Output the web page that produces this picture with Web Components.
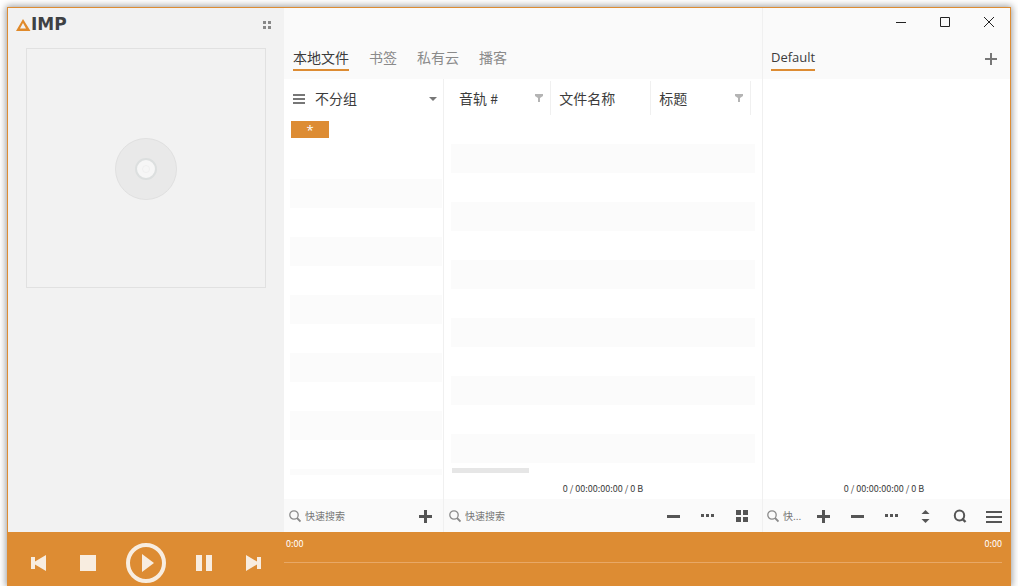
<!DOCTYPE html>
<html lang="zh-CN">
<head>
<meta charset="utf-8">
<title>AIMP</title>
<style>
  :root {
    --accent: #dd8c33;
    --bar: #fafafa;
    --stripe: #fbfbfb;
    --line: #f0f0f0;
    --ink: #3c3c3c;
    --muted: #8a8a8a;
    --glyph: #555;
  }
  body {
    margin: 0;
    background: #fff;
    overflow: hidden;
    color: var(--ink);
    font: 14px/20px "Noto Sans CJK SC", sans-serif;
  }
</style>
</head>
<body>
<player-window>
  <cover-panel slot="side"></cover-panel>
  <media-library slot="library"></media-library>
  <play-list slot="playlist"></play-list>
  <transport-bar slot="transport"></transport-bar>
</player-window>

<script>
const define = (name, html, setup) => {
  const template = document.createElement('template');
  template.innerHTML = html;
  customElements.define(name, class extends HTMLElement {
    constructor() {
      super();
      this.attachShadow({ mode: 'open' }).append(template.content.cloneNode(true));
    }
    connectedCallback() {
      if (setup) setup(this, this.shadowRoot);
    }
  });
};

const rect = (x, y, w, h) => `<rect x="${x}" y="${y}" width="${w}" height="${h}"/>`;
const svg = (w, h, body) => `<svg width="${w}" height="${h}" viewBox="0 0 ${w} ${h}" fill="currentColor" aria-hidden="true">${body}</svg>`;
const icons = {
  plus: svg(16, 16, rect(1, 7, 13, 3) + rect(6, 2, 3, 13)),
  minus: svg(16, 16, rect(1, 7, 13, 3)),
  dots: svg(16, 16, rect(1, 6, 3, 3) + rect(6, 6, 3, 3) + rect(11, 6, 3, 3)),
  tiles: svg(16, 16, rect(2, 2, 5, 5) + rect(9, 2, 5, 5) + rect(2, 9, 5, 5) + rect(9, 9, 5, 5)),
  sort: svg(16, 16, '<path d="M7.5 2 11.5 6h-8zM7.5 15l-4-4h8z"/>'),
  find: svg(16, 16, '<ellipse cx="7.5" cy="7.5" rx="4.7" ry="5" fill="none" stroke="currentColor" stroke-width="2"/><path d="m10 10.500 3.500 3.500" stroke="currentColor" stroke-width="2.4"/>'),
  menu: svg(16, 16, rect(0, 3, 16, 2) + rect(0, 8, 16, 2) + rect(0, 13, 16, 2)),
  lens: svg(12, 14, '<circle cx="5" cy="6" r="4.2" fill="none" stroke="currentColor" stroke-width="1.3"/><path d="m8 9 3.5 3.5" stroke="currentColor" stroke-width="1.8"/>'),
  add: svg(12, 12, rect(0, 5, 12, 2) + rect(5, 0, 2, 12)),
  list: svg(12, 12, rect(0, 1, 12, 2) + rect(0, 5, 12, 2) + rect(0, 9, 12, 2)),
  caret: svg(8, 4, '<path d="M0 0h8L4 4z"/>'),
  funnel: svg(8, 8, '<path d="M0 0h8v2L5 4v4H3V4L0 2z"/>'),
  grip: svg(8, 8, rect(0, 0, 3, 3) + rect(5, 0, 3, 3) + rect(0, 5, 3, 3) + rect(5, 5, 3, 3)),
  minimize: svg(11, 11, rect(0, 5, 10, 1)),
  maximize: svg(11, 11, '<path d="M.5.5h9v9h-9z" fill="none" stroke="currentColor"/>'),
  close: svg(11, 11, '<path d="m0 0 10 10M10 0 0 10" fill="none" stroke="currentColor"/>'),
  prev: svg(16, 16, '<path d="M1 2h4v4.5L16 0v16L5 9.5V14H1z"/>'),
  stop: svg(16, 16, rect(0, 0, 16, 16)),
  play: svg(40, 40, '<circle cx="20" cy="20" r="18" fill="none" stroke="currentColor" stroke-width="4"/><path d="M16 11v18l12-9z"/>'),
  pause: svg(16, 16, rect(0, 0, 6, 16) + rect(10, 0, 6, 16)),
  next: svg(16, 16, '<path d="M15 2h-4v4.5L0 0v16l11-6.5V14h4z"/>')
};

define('ui-icon', `
  <style>
    :host { display: block; }
    span, svg { display: block; }
  </style>
  <span></span>`, (el, root) => {
  root.querySelector('span').innerHTML = icons[el.getAttribute('name')] || '';
});

define('icon-button', `
  <style>
    :host { display: block; color: var(--glyph); }
    button {
      display: flex; align-items: center; justify-content: center;
      width: 100%; height: 100%; padding: 0; border: 0;
      background: none; color: inherit; cursor: pointer;
    }
  </style>
  <button type="button"></button>`, (el, root) => {
  const icon = document.createElement('ui-icon');
  icon.setAttribute('name', el.getAttribute('icon'));
  const button = root.querySelector('button');
  button.setAttribute('aria-label', el.getAttribute('label'));
  button.replaceChildren(icon);
});

define('quick-search', `
  <style>
    :host { display: block; flex: 1; min-width: 0; }
    label { display: flex; align-items: center; gap: 4px; height: 16px; color: var(--muted); }
    ui-icon { flex: none; }
    input {
      flex: 1; min-width: 0; width: 20px; height: 16px; padding: 0; border: 0; outline: 0;
      background: none; color: var(--ink);
      font: 10px/16px "Noto Sans CJK SC", sans-serif;
    }
    input::placeholder { color: #777; opacity: 1; }
  </style>
  <label><ui-icon name="lens"></ui-icon><input type="text" aria-label="快速搜索"></label>`, (el, root) => {
  root.querySelector('input').placeholder = el.getAttribute('hint') || '快速搜索';
});

define('tool-bar', `
  <style>
    :host {
      display: flex; gap: 18px; box-sizing: border-box; height: 33px; flex: none;
      padding: 9px 9px 8px 5px; background: var(--bar);
    }
    ::slotted(icon-button) { width: 16px; height: 16px; flex: none; }
  </style>
  <slot></slot>`);

define('tab-link', `
  <style>
    :host { display: block; }
    a {
      display: block; color: var(--muted); text-decoration: none;
      line-height: 18px; padding-bottom: 3px; border-bottom: 2px solid transparent;
    }
    :host([active]) a { color: var(--ink); border-color: var(--accent); }
  </style>
  <a href="#"><slot></slot></a>`);

define('cover-panel', `
  <style>
    :host { display: block; background: #f2f2f2; }
    header { display: flex; align-items: center; height: 40px; box-sizing: border-box; padding: 0 13px 7px 8px; }
    h1 {
      display: flex; align-items: center; margin: 0; flex: 1; color: #3e4144;
      font: bold 17px/17px "DejaVu Sans", sans-serif;
    }
    icon-button { width: 8px; height: 8px; --glyph: #888; }
    .art {
      display: flex; align-items: center; justify-content: center;
      box-sizing: border-box; margin: 0 18px; padding-top: 2px; aspect-ratio: 1; border: 1px solid #e1e1e1;
    }
    .art svg { display: block; }
  </style>
  <header>
    <h1 aria-label="AIMP">
      <svg width="15" height="12" viewBox="0 0 15 12" aria-hidden="true">
        <path d="M7 0 14.500 12H10l-1.500-2.500L10 9.500 7 4 4 9.500h4.500L10 12H0z" fill="#e08a2b"/>
      </svg>IMP
    </h1>
    <icon-button icon="grip" label="菜单"></icon-button>
  </header>
  <div class="art">
    <svg width="62" height="62" viewBox="0 0 62 62" role="img" aria-label="光盘">
      <circle cx="31" cy="31" r="30.500" fill="#e9e9e9" stroke="#e0e0e0"/>
      <circle cx="31" cy="31" r="10" fill="#f6f6f6" stroke="#dcdfdf" stroke-width="2"/>
      <circle cx="31" cy="31" r="3.500" fill="none" stroke="#f0f0f0"/>
    </svg>
  </div>`);

define('group-list', `
  <style>
    :host { display: flex; flex-direction: column; border-right: 1px solid var(--line); }
    .head { display: flex; align-items: center; gap: 10px; height: 40px; padding: 0 6px 0 9px; flex: none; }
    .head > ui-icon { color: #777; flex: none; }
    .pick { display: grid; flex: 1; align-items: center; }
    select, .pick ui-icon { grid-area: 1 / 1; }
    select {
      appearance: none; width: 100%; height: 24px; padding: 0 0 2px; border: 0; background: none;
      color: var(--ink); font: 14px/20px "Noto Sans CJK SC", sans-serif;
    }
    .pick ui-icon { justify-self: end; color: #777; pointer-events: none; }
    .rows {
      flex: 1; margin: 2px 1px 24px 6px;
      background: repeating-linear-gradient(transparent 0 29px, var(--stripe) 29px 58px) 0 29px no-repeat;
    }
    .tag {
      display: block; width: 38px; height: 17px; margin: 0 0 0 1px; padding: 2px 0 0; border: 0;
      background: var(--accent); color: #fff; font: 13px/15px "Open Sans", sans-serif;
    }
  </style>
  <div class="head">
    <ui-icon name="list"></ui-icon>
    <div class="pick">
      <select aria-label="分组"><option>不分组</option></select>
      <ui-icon name="caret"></ui-icon>
    </div>
  </div>
  <div class="rows"><button class="tag" type="button">*</button></div>
  <tool-bar>
    <quick-search></quick-search>
    <icon-button icon="plus" label="添加"></icon-button>
  </tool-bar>`);

define('track-table', `
  <style>
    :host { display: flex; flex-direction: column; min-width: 0; }
    table { margin: 2px 7px 0; width: 300px; border-collapse: collapse; table-layout: fixed; flex: none; }
    th {
      height: 34px; padding: 0 7px 0 8px; text-align: left; font-weight: 400;
      border-right: 1px solid var(--line);
    }
    .cell { display: flex; align-items: center; justify-content: space-between; }
    .cell ui-icon { color: #b4b4b4; }
    .rows {
      flex: 1; margin: 0 7px;
      background: repeating-linear-gradient(transparent 0 29px, var(--stripe) 29px 58px);
    }
    .scroll { height: 5px; width: 77px; margin: 5px 8px; background: #e6e6e6; flex: none; }
    output { display: block; height: 21px; text-align: center; font-size: 9px; line-height: 21px; flex: none; }
    tool-bar { padding-right: 12px; }
  </style>
  <table>
    <thead><tr>
      <th><div class="cell">音轨 #<ui-icon name="funnel"></ui-icon></div></th>
      <th>文件名称</th>
      <th><div class="cell">标题<ui-icon name="funnel"></ui-icon></div></th>
    </tr></thead>
  </table>
  <div class="rows"></div>
  <div class="scroll"></div>
  <output>0 / 00:00:00:00 / 0 B</output>
  <tool-bar>
    <quick-search></quick-search>
    <icon-button icon="minus" label="删除"></icon-button>
    <icon-button icon="dots" label="更多"></icon-button>
    <icon-button icon="tiles" label="视图"></icon-button>
  </tool-bar>`);

define('media-library', `
  <style>
    :host { display: flex; flex-direction: column; border-right: 1px solid var(--line); }
    nav {
      display: flex; align-items: flex-end; gap: 20px; height: 71px; box-sizing: border-box;
      padding: 0 9px 8px; background: var(--bar); flex: none;
    }
    .body { display: grid; grid-template-columns: 160px 1fr; flex: 1; }
  </style>
  <nav>
    <tab-link active>本地文件</tab-link>
    <tab-link>书签</tab-link>
    <tab-link>私有云</tab-link>
    <tab-link>播客</tab-link>
  </nav>
  <div class="body">
    <group-list></group-list>
    <track-table></track-table>
  </div>`);

define('play-list', `
  <style>
    :host { display: flex; flex-direction: column; }
    header {
      display: flex; flex-direction: column; justify-content: space-between;
      height: 71px; box-sizing: border-box; padding: 9px 13px 8px 8px; background: var(--bar); flex: none;
    }
    .controls { display: flex; justify-content: flex-end; gap: 33px; padding-right: 2px; --glyph: #222; }
    .controls icon-button { width: 11px; height: 11px; }
    .tabs { display: flex; align-items: center; justify-content: space-between; }
    .tabs icon-button { width: 12px; height: 12px; margin-bottom: 1px; --glyph: #777; }
    tab-link { font: 500 13px/18px "Open Sans", sans-serif; }
    .rows { flex: 1; }
    output { display: block; height: 21px; padding-right: 5px; text-align: center; font-size: 9px; line-height: 21px; flex: none; }
    tool-bar { padding-left: 4px; padding-right: 8px; }
    quick-search { margin-right: -8px; }
  </style>
  <header>
    <div class="controls">
      <icon-button icon="minimize" label="最小化"></icon-button>
      <icon-button icon="maximize" label="最大化"></icon-button>
      <icon-button icon="close" label="关闭"></icon-button>
    </div>
    <div class="tabs">
      <tab-link active>Default</tab-link>
      <icon-button icon="add" label="新建播放列表"></icon-button>
    </div>
  </header>
  <div class="rows"></div>
  <output>0 / 00:00:00:00 / 0 B</output>
  <tool-bar>
    <quick-search hint="快..."></quick-search>
    <icon-button icon="plus" label="添加"></icon-button>
    <icon-button icon="minus" label="删除"></icon-button>
    <icon-button icon="dots" label="更多"></icon-button>
    <icon-button icon="sort" label="排序"></icon-button>
    <icon-button icon="find" label="查找"></icon-button>
    <icon-button icon="menu" label="菜单"></icon-button>
  </tool-bar>`);

define('transport-bar', `
  <style>
    :host {
      display: grid; grid-template-columns: 276px 1fr; height: 54px;
      background: var(--accent); color: #fff; --glyph: #f8ede0;
    }
    .buttons { display: flex; padding: 8px 5px 0; }
    .buttons icon-button { width: 50px; height: 46px; }
    .buttons icon-button.big { width: 66px; }
    .seek { padding: 4px 8px 0 0; }
    .times { display: flex; justify-content: space-between; padding-left: 2px; font-size: 9px; line-height: 16px; }
    input {
      appearance: none; display: block; width: 100%; height: 21px; margin: 0;
      background: linear-gradient(#e8a866, #e8a866) center / 100% 1px no-repeat;
    }
    input::-webkit-slider-thumb { appearance: none; width: 0; height: 0; }
  </style>
  <div class="buttons">
    <icon-button icon="prev" label="上一首"></icon-button>
    <icon-button icon="stop" label="停止"></icon-button>
    <icon-button class="big" icon="play" label="播放"></icon-button>
    <icon-button icon="pause" label="暂停"></icon-button>
    <icon-button icon="next" label="下一首"></icon-button>
  </div>
  <div class="seek">
    <div class="times"><span>0:00</span><span>0:00</span></div>
    <input type="range" min="0" max="100" value="0" aria-label="播放进度">
  </div>`);

define('player-window', `
  <style>
    :host { display: flex; box-sizing: border-box; min-height: 100vh; padding: 7px 7px 0; }
    main {
      flex: 1; display: grid; grid-template: 1fr auto / 276px 1fr 247px;
      border: 1px solid var(--accent); border-bottom: 0;
      box-shadow: 0 0 7px 1px rgba(0, 0, 0, .4);
    }
    slot[name="transport"]::slotted(*) { grid-column: 1 / -1; }
  </style>
  <main>
    <slot name="side"></slot>
    <slot name="library"></slot>
    <slot name="playlist"></slot>
    <slot name="transport"></slot>
  </main>`);
</script>
</body>
</html>
